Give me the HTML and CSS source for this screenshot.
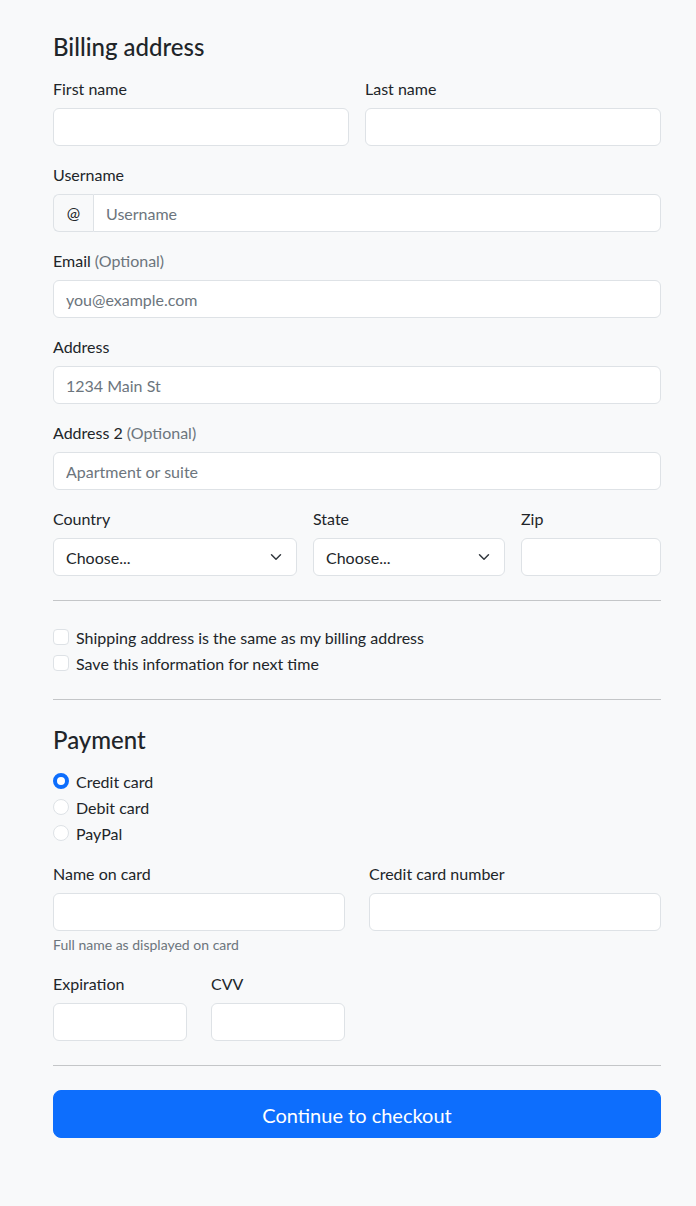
FILE: index.html
```html
<!DOCTYPE html>
<html lang="en">
<head>
<meta charset="utf-8">
<title>Checkout</title>
<link rel="stylesheet" href="styles.css">
</head>
<body>
<main class="page">
  <h4 class="heading">Billing address</h4>
  <form class="form">
    <div class="grid grid-2 gap-16">
      <div class="field">
        <label class="label">First name</label>
        <input class="input" type="text">
      </div>
      <div class="field">
        <label class="label">Last name</label>
        <input class="input" type="text">
      </div>
      <div class="field span-all">
        <label class="label">Username</label>
        <div class="input-group">
          <span class="addon">@</span>
          <input class="input input-join" type="text" placeholder="Username">
        </div>
      </div>
      <div class="field span-all">
        <label class="label">Email <span class="muted">(Optional)</span></label>
        <input class="input" type="email" placeholder="you@example.com">
      </div>
      <div class="field span-all">
        <label class="label">Address</label>
        <input class="input" type="text" placeholder="1234 Main St">
      </div>
      <div class="field span-all">
        <label class="label">Address 2 <span class="muted">(Optional)</span></label>
        <input class="input" type="text" placeholder="Apartment or suite">
      </div>
    </div>
    <div class="grid grid-543 gap-16 row-next">
      <div class="field">
        <label class="label">Country</label>
        <div class="select">Choose...</div>
      </div>
      <div class="field">
        <label class="label">State</label>
        <div class="select">Choose...</div>
      </div>
      <div class="field">
        <label class="label">Zip</label>
        <input class="input" type="text">
      </div>
    </div>

    <hr class="rule">

    <div class="check"><span class="box"></span><span class="check-text">Shipping address is the same as my billing address</span></div>
    <div class="check"><span class="box"></span><span class="check-text">Save this information for next time</span></div>

    <hr class="rule">

    <h4 class="heading">Payment</h4>
    <div class="radios">
      <div class="check"><span class="radio radio-on"></span><span class="check-text">Credit card</span></div>
      <div class="check"><span class="radio"></span><span class="check-text">Debit card</span></div>
      <div class="check"><span class="radio"></span><span class="check-text">PayPal</span></div>
    </div>

    <div class="grid grid-2 gap-24">
      <div class="field">
        <label class="label">Name on card</label>
        <input class="input" type="text">
        <small class="help">Full name as displayed on card</small>
      </div>
      <div class="field">
        <label class="label">Credit card number</label>
        <input class="input" type="text">
      </div>
    </div>
    <div class="grid grid-4 gap-24 row-next">
      <div class="field">
        <label class="label">Expiration</label>
        <input class="input" type="text">
      </div>
      <div class="field">
        <label class="label">CVV</label>
        <input class="input" type="text">
      </div>
    </div>

    <hr class="rule">

    <button class="btn" type="button">Continue to checkout</button>
  </form>
</main>
</body>
</html>
```

FILE: styles.css
```css
* { box-sizing: border-box; }
html, body { margin: 0; }
body {
  background: #f8f9fa;
  color: #212529;
  font-family: Lato, "Noto Sans", sans-serif;
  font-size: 16px;
  line-height: 1.5;
}
.page {
  width: 608px;
  margin-left: 53px;
  padding-top: 31.2px;
  padding-bottom: 40px;
}
.heading {
  margin: 0 0 16px;
  padding-top: 3px;
  font-size: 24px;
  font-weight: 500;
  line-height: 25.8px;
}
.form { margin: 0; }
.grid { display: grid; }
.grid-2 { grid-template-columns: 1fr 1fr; }
.grid-543 { grid-template-columns: 244px 192px 140px; }
.grid-4 { grid-template-columns: repeat(4, 1fr); }
.gap-16 { column-gap: 16px; row-gap: 16px; }
.gap-24 { column-gap: 24px; row-gap: 16px; }
.row-next { margin-top: 16px; }
.span-all { grid-column: 1 / -1; }
.field { display: flex; flex-direction: column; min-width: 0; }
.label {
  display: block;
  margin-bottom: 8px;
  padding-top: 1px;
  line-height: 23px;
}
.muted { color: #6c757d; }
.input {
  display: block;
  width: 100%;
  height: 38px;
  padding: 7px 12px 5px;
  font: inherit;
  color: #212529;
  background: #fff;
  border: 1px solid #dee2e6;
  border-radius: 6px;
  outline: none;
}
.input::placeholder { color: #6c757d; opacity: 1; }
.input-group { display: flex; }
.addon {
  display: flex;
  align-items: center;
  justify-content: center;
  width: 40px;
  height: 38px;
  padding-top: 1px;
  background: #f8f9fa;
  border: 1px solid #dee2e6;
  border-right: none;
  border-radius: 6px 0 0 6px;
}
.input-join { flex: 1; border-radius: 0 6px 6px 0; }
.select {
  height: 38px;
  padding: 7px 36px 5px 12px;
  line-height: 24px;
  background: #fff url("data:image/svg+xml,%3csvg xmlns='http://www.w3.org/2000/svg' viewBox='0 0 16 16'%3e%3cpath fill='none' stroke='%23343a40' stroke-linecap='round' stroke-linejoin='round' stroke-width='2' d='m2 5 6 6 6-6'/%3e%3c/svg%3e") no-repeat right 12px center / 16px 12px;
  border: 1px solid #dee2e6;
  border-radius: 6px;
}
.rule {
  margin: 24px 0;
  border: 0;
  border-top: 1px solid #c4c6c8;
  height: 0;
}
.check {
  display: flex;
  align-items: flex-start;
  min-height: 24px;
  margin-bottom: 2px;
  line-height: 24px;
}
.check-text { padding-top: 1px; line-height: 23px; }
.box, .radio {
  flex: none;
  width: 16px;
  height: 16px;
  margin: 4px 7px 0 0;
  background: #fff;
  border: 1px solid #dee2e6;
}
.box { border-radius: 4px; }
.radio { border-radius: 50%; }
.radio-on {
  background: #fff;
  border: 4.5px solid #0d6efd;
}
.radios { margin-bottom: 16px; }
.help {
  margin-top: 4px;
  font-size: 14px;
  line-height: 20px;
  color: #6c757d;
}
.btn {
  display: block;
  width: 100%;
  height: 48px;
  padding: 9px 16px 7px;
  font: inherit;
  font-size: 20px;
  line-height: 30px;
  color: #fff;
  background: #0d6efd;
  border: 1px solid #0d6efd;
  border-radius: 8px;
  cursor: pointer;
}
```
